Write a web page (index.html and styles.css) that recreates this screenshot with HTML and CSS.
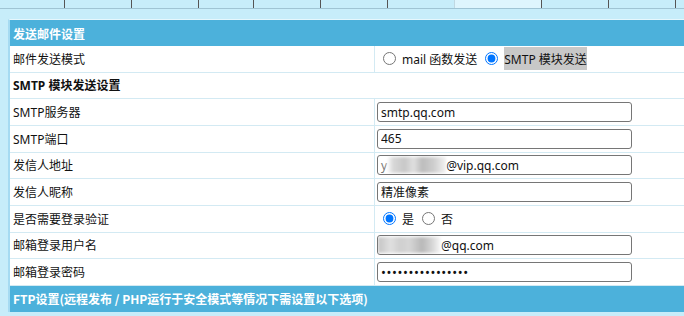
FILE: index.html
```html
<!DOCTYPE html>
<html lang="zh-CN">
<head>
<meta charset="utf-8">
<title>发送邮件设置</title>
<link rel="stylesheet" href="styles.css">
</head>
<body>
<div class="tabs">
  <div class="tab t-first"></div>
  <div class="tab"></div>
  <div class="tab"></div>
  <div class="tab t-narrow"></div>
  <div class="tab"></div>
  <div class="tab"></div>
  <div class="tab t-plain"></div>
  <div class="tab t-active"></div>
  <div class="tab"></div>
  <div class="tab"></div>
  <div class="tab t-last"></div>
</div>
<div class="panel">
  <div class="row head">发送邮件设置</div>
  <div class="row">
    <div class="label">邮件发送模式</div>
    <div class="value">
      <label class="opt"><input type="radio" name="mode">mail 函数发送</label>
      <label class="opt"><input type="radio" name="mode" checked><span class="sel">SMTP 模块发送</span></label>
    </div>
  </div>
  <div class="row sub">SMTP 模块发送设置</div>
  <div class="row">
    <div class="label">SMTP服务器</div>
    <div class="value"><input class="field" type="text" value="smtp.qq.com"></div>
  </div>
  <div class="row">
    <div class="label">SMTP端口</div>
    <div class="value"><input class="field" type="text" value="465"></div>
  </div>
  <div class="row">
    <div class="label">发信人地址</div>
    <div class="value"><div class="field fake"><span class="vis">y</span><span class="blur b1"></span>@vip.qq.com</div></div>
  </div>
  <div class="row">
    <div class="label">发信人昵称</div>
    <div class="value"><input class="field" type="text" value="精准像素"></div>
  </div>
  <div class="row">
    <div class="label">是否需要登录验证</div>
    <div class="value">
      <label class="opt"><input type="radio" name="auth" checked>是</label>
      <label class="opt"><input type="radio" name="auth">否</label>
    </div>
  </div>
  <div class="row">
    <div class="label">邮箱登录用户名</div>
    <div class="value"><div class="field fake user"><span class="blur b2"></span>@qq.com</div></div>
  </div>
  <div class="row">
    <div class="label">邮箱登录密码</div>
    <div class="value"><input class="field pass" type="password" value="abcdefghijklmnop"></div>
  </div>
  <div class="row head">FTP设置(远程发布 / PHP运行于安全模式等情况下需设置以下选项)</div>
</div>
</body>
</html>
```
FILE: styles.css
```css
html, body {
  margin: 0;
  padding: 0;
}
body {
  background: #c7edfa;
  font-family: "Noto Sans", "Noto Sans CJK SC", sans-serif;
  font-size: 12px;
  color: #111;
  overflow: hidden;
  height: 316px;
}
.tabs {
  display: flex;
  height: 8px;
  border-bottom: 1px solid #9fc4d4;
}
.tab {
  width: 66px;
  flex: none;
  border-right: 1px solid #555;
}
.t-first { width: 64px; }
.t-narrow { width: 54px; }
.t-plain { border-right-color: #c0d8e2; }
.t-active { width: 86px; background: #def5fd; }
.t-last { width: 20px; border-right: none; }
.panel {
  margin: 10px 0 0 8px;
  border-top: 1px solid #e6f7fd;
  border-left: 2px solid #a6dbf2;
  background: #fff;
}
.row {
  display: flex;
  align-items: center;
  height: 26.67px;
  box-sizing: border-box;
  border-bottom: 1px solid #d3eaf3;
}
.row.head {
  background: #4cb1db;
  color: #fff;
  font-weight: bold;
  padding-left: 3px;
  border-bottom: none;
  height: 26px;
  font-family: "Noto Sans CJK SC", sans-serif;
}
.row.sub {
  font-weight: bold;
  padding-left: 3px;
  font-family: "Noto Sans", "Noto Sans CJK SC", sans-serif;
}
.label {
  width: 361px;
  flex: none;
  padding-left: 3px;
  height: 100%;
  display: flex;
  align-items: center;
  border-right: 1px solid #d3eaf3;
}
.value {
  flex: 1;
  padding-left: 2px;
  display: flex;
  align-items: center;
  height: 100%;
}
.opt {
  display: inline-flex;
  align-items: center;
  margin-right: 2px;
}
.opt input {
  margin: 0 6px 0 6px;
  width: 13px;
  height: 13px;
}
.sel {
  background: #c8c8c8;
  padding: 3px 0 2px 0;
}
.field {
  box-sizing: border-box;
  width: 255px;
  height: 20px;
  border: 1px solid #767676;
  border-radius: 3px;
  padding: 0 3px;
  font-family: "Noto Sans", "Noto Sans CJK SC", sans-serif;
  font-size: 12px;
  color: #111;
  background: #fff;
  margin: 0;
}
.pass {
  letter-spacing: 0.6px;
  font-size: 13px;
}
.fake {
  display: flex;
  align-items: center;
  overflow: hidden;
}
.fake.user { padding-left: 0; }
.vis { color: #777; }
.blur {
  display: inline-block;
  height: 16px;
  filter: blur(1.5px);
}
.b1 {
  width: 59px;
  background: linear-gradient(90deg, #fff 0, #d8d8d8 10%, #c8c8c8 30%, #e0e0e0 45%, #bcbcbc 60%, #cfcfcf 80%, #f2f2f2 100%);
}
.b2 {
  width: 63px;
  background: linear-gradient(90deg, #c4c4c4 0, #e0e0e0 20%, #cfcfcf 35%, #d6d6d6 50%, #b8b8b8 70%, #dadada 88%, #fafafa 100%);
}
```
